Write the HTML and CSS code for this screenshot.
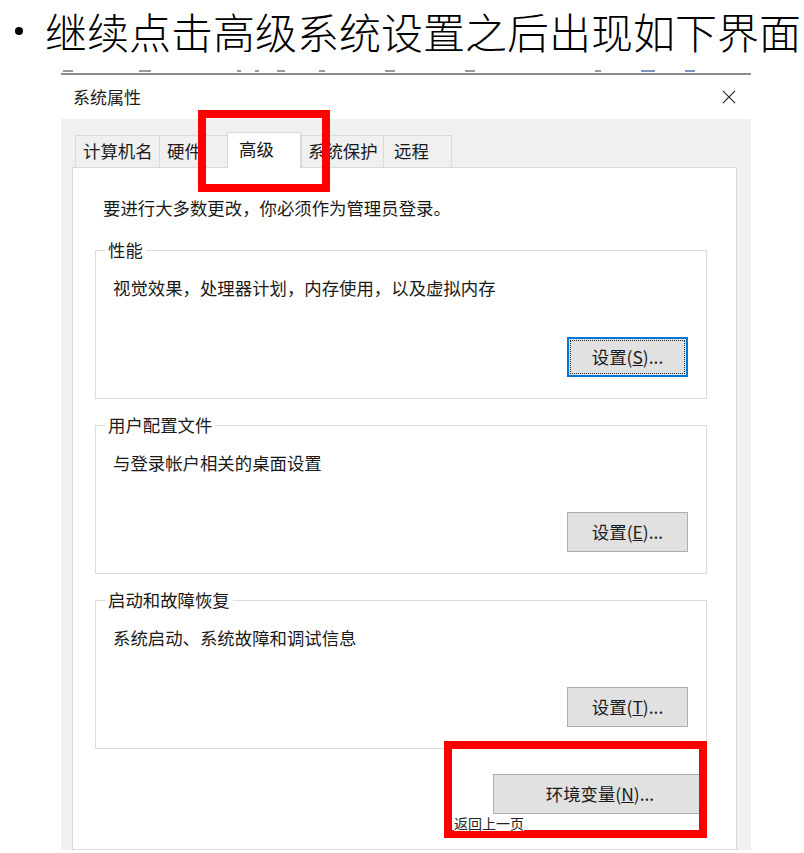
FILE: index.html
```html
<!DOCTYPE html>
<html lang="zh-CN">
<head>
<meta charset="utf-8">
<title>系统属性</title>
<link rel="stylesheet" href="styles.css">
</head>
<body>
<div class="slide">
  <div class="headline">
    <span class="bullet"></span>
    <span class="headline-text">继续点击高级系统设置之后出现如下界面</span>
  </div>
  <div class="cut" aria-hidden="true">
    <span class="frag f1"></span>
    <span class="frag f2"></span>
    <span class="frag f3"></span>
    <span class="frag f4"></span>
    <span class="frag f5"></span>
    <span class="frag f6"></span>
    <span class="frag f7"></span>
    <span class="frag f8"></span>
    <span class="frag f9"></span>
    <span class="frag f10 blue"></span>
    <span class="frag f11 blue"></span>
  </div>
  <div class="dialog">
    <div class="titlebar">
      <span class="title">系统属性</span>
      <svg class="close" viewBox="0 0 16 16" width="16" height="15" aria-hidden="true">
        <path d="M1.5 1 L14.5 14 M14.5 1 L1.5 14" stroke="#2b2b2b" stroke-width="1.3" fill="none"/>
      </svg>
    </div>
    <div class="dialog-body">
      <div class="tabs">
        <div class="tab t1">计算机名</div>
        <div class="tab t2">硬件</div>
        <div class="tab t3 selected">高级</div>
        <div class="tab t4">系统保护</div>
        <div class="tab t5">远程</div>
      </div>
      <div class="panel">
        <p class="notice">要进行大多数更改，你必须作为管理员登录。</p>
        <fieldset class="group">
          <legend>性能</legend>
          <p class="desc">视觉效果，处理器计划，内存使用，以及虚拟内存</p>
          <div class="actions"><button class="btn focused">设置(<u>S</u>)...</button></div>
        </fieldset>
        <fieldset class="group">
          <legend>用户配置文件</legend>
          <p class="desc">与登录帐户相关的桌面设置</p>
          <div class="actions"><button class="btn">设置(<u>E</u>)...</button></div>
        </fieldset>
        <fieldset class="group">
          <legend>启动和故障恢复</legend>
          <p class="desc">系统启动、系统故障和调试信息</p>
          <div class="actions"><button class="btn">设置(<u>T</u>)...</button></div>
        </fieldset>
        <div class="actions env"><button class="btn wide">环境变量(<u>N</u>)...</button></div>
      </div>
    </div>
  </div>
  <div class="mark mark-tab"></div>
  <div class="mark mark-env"></div>
  <div class="back-link">返回上一页</div>
</div>
</body>
</html>
```
FILE: styles.css
```css
* { box-sizing: border-box; }

html, body {
  margin: 0;
  padding: 0;
  background: #ffffff;
}

body {
  font-family: "Noto Sans CJK SC", "Noto Sans", sans-serif;
  color: #1a1a1a;
}

.slide {
  position: relative;
  width: 804px;
  height: 853px;
  overflow: hidden;
}

/* headline */
.headline {
  display: flex;
  align-items: center;
  height: 52px;
  padding-top: 10px;
}

.bullet {
  width: 8px;
  height: 8px;
  border-radius: 50%;
  background: #000;
  margin-left: 15px;
  margin-right: 22px;
}

.headline-text {
  font-family: "Noto Sans CJK SC", sans-serif;
  font-weight: 300;
  font-size: 42px;
  line-height: 42px;
  color: #000;
  white-space: nowrap;
}

/* clipped strip left over from the previous screenshot */
.cut {
  display: flex;
  align-items: flex-end;
  gap: 0;
  margin-top: 15px;
  margin-left: 61px;
  width: 690px;
  height: 8px;
  border-bottom: 2px solid #8c8c8c;
}

.frag {
  height: 2px;
  background: #9a9a9a;
  margin-bottom: 1px;
}

.frag.blue { background: #7f97c8; }

.f1 { width: 10px; margin-left: 2px; }
.f2 { width: 12px; margin-left: 66px; }
.f3 { width: 4px; margin-left: 86px; }
.f4 { width: 4px; margin-left: 14px; }
.f5 { width: 8px; margin-left: 18px; }
.f6 { width: 6px; margin-left: 34px; }
.f7 { width: 10px; margin-left: 60px; }
.f8 { width: 10px; margin-left: 70px; }
.f9 { width: 6px; margin-left: 120px; }
.f10 { width: 14px; margin-left: 40px; }
.f11 { width: 10px; margin-left: 30px; }

/* dialog */
.dialog {
  margin-left: 61px;
  width: 690px;
}

.titlebar {
  display: flex;
  align-items: center;
  justify-content: space-between;
  height: 44px;
  padding: 0 14px 0 12px;
}

.title {
  font-size: 17px;
  line-height: 20px;
}

.close { display: block; }

.dialog-body {
  height: 731px;
  background: #f0f0f0;
  padding: 0 14px 0 11px;
  overflow: hidden;
}

.tabs {
  display: flex;
  align-items: flex-end;
  height: 48px;
  padding-left: 3px;
}

.tab {
  height: 32px;
  border: 1px solid #d9d9d9;
  border-bottom: none;
  background: #f0f0f0;
  font-size: 17.4px;
  line-height: 30px;
  padding-left: 7px;
  white-space: nowrap;
}

.t1 { width: 85px; }
.t2 { width: 70px; margin-left: -1px; }
.t3 { width: 74px; margin-left: -2px; }
.t4 { width: 83px; padding-left: 6px; }
.t5 { width: 69px; margin-left: -1px; padding-left: 10px; }

.tab.selected {
  position: relative;
  z-index: 1;
  height: 36px;
  margin-bottom: -1px;
  background: #ffffff;
  padding-left: 11px;
  padding-top: 1px;
}

.panel {
  height: 683px;
  background: #ffffff;
  border: 1px solid #d9d9d9;
  padding-top: 30px;
}

.notice {
  margin: 0;
  padding-left: 30px;
  font-size: 17.4px;
  line-height: 20px;
}

.group {
  margin: 22px 29px 0 22px;
  padding: 18px 18px 21px 9px;
  border: 1px solid #dcdcdc;
  min-width: 0;
}

.group + .group { margin-top: 16px; }

.group legend {
  padding: 0 3px;
  margin: 0;
  font-size: 17.4px;
  line-height: 20px;
}

.desc {
  margin: 0;
  padding-left: 8px;
  font-size: 17.4px;
  line-height: 20px;
}

.actions {
  display: flex;
  justify-content: flex-end;
  margin-top: 39px;
}

.actions.env {
  margin-top: 25px;
  margin-right: 29px;
}

.btn {
  position: relative;
  width: 121px;
  height: 40px;
  padding: 0;
  background: #e1e1e1;
  border: 1px solid #adadad;
  font-family: "Noto Sans CJK SC", sans-serif;
  font-size: 17.4px;
  line-height: 20px;
  color: #1a1a1a;
}

.btn.wide { width: 214px; }

.btn.focused {
  border: 2px solid #0078d7;
}

.btn.focused::after {
  content: "";
  position: absolute;
  inset: 1px;
  border: 1px dotted #2a2a2a;
}

/* annotations */
.mark {
  position: absolute;
  border: 8px solid #ff0000;
}

.mark-tab {
  left: 198px;
  top: 110px;
  width: 132px;
  height: 82px;
}

.mark-env {
  left: 444px;
  top: 741px;
  width: 263px;
  height: 97px;
}

.back-link {
  position: absolute;
  left: 454px;
  top: 815px;
  font-size: 14px;
  line-height: 16px;
  color: #222;
  background: #fff;
}
```
